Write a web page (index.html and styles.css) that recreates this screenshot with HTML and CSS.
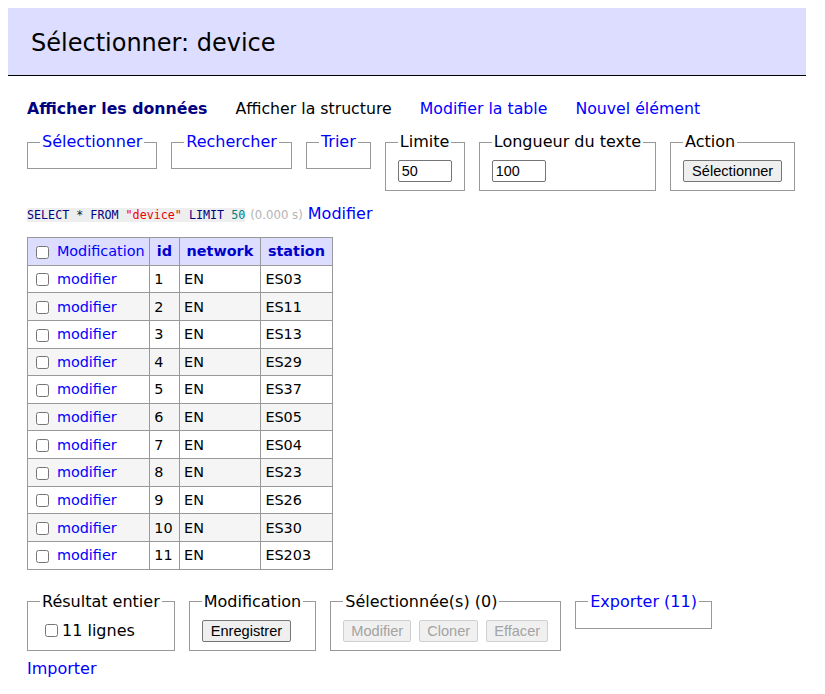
FILE: index.html
```html
<!DOCTYPE html>
<html lang="fr">
<head>
<meta charset="utf-8">
<title>Sélectionner: device</title>
<link rel="stylesheet" href="styles.css">
</head>
<body>
<div class="page">
  <h1 class="title">Sélectionner: device</h1>
  <div class="content">
    <p class="nav">
      <a class="current" href="#">Afficher les données</a>
      <a class="plain" href="#">Afficher la structure</a>
      <a href="#">Modifier la table</a>
      <a href="#">Nouvel élément</a>
    </p>
    <form class="filters">
      <fieldset class="box"><legend><a href="#">Sélectionner</a></legend></fieldset>
      <fieldset class="box"><legend><a href="#">Rechercher</a></legend></fieldset>
      <fieldset class="box"><legend><a href="#">Trier</a></legend></fieldset>
      <fieldset class="box"><legend>Limite</legend><div class="row"><input class="text" type="text" value="50"></div></fieldset>
      <fieldset class="box"><legend>Longueur du texte</legend><div class="row"><input class="text" type="text" value="100"></div></fieldset>
      <fieldset class="box"><legend>Action</legend><div class="row"><button class="btn" type="button">Sélectionner</button></div></fieldset>
    </form>
    <p class="query"><code class="sql"><span class="kw">SELECT</span> * <span class="kw">FROM</span> <span class="str">"device"</span> <span class="kw">LIMIT</span> <span class="num">50</span></code> <span class="time">(0.000 s)</span> <a href="#">Modifier</a></p>
    <table class="grid">
      <thead>
        <tr><td><input class="check" type="checkbox"> <a class="lnk" href="#">Modification</a></td><th><a class="col" href="#">id</a></th><th><a class="col" href="#">network</a></th><th><a class="col" href="#">station</a></th></tr>
      </thead>
      <tbody>
        <tr><td><input class="check" type="checkbox"> <a class="lnk" href="#">modifier</a></td><td>1</td><td>EN</td><td>ES03</td></tr>
        <tr><td><input class="check" type="checkbox"> <a class="lnk" href="#">modifier</a></td><td>2</td><td>EN</td><td>ES11</td></tr>
        <tr><td><input class="check" type="checkbox"> <a class="lnk" href="#">modifier</a></td><td>3</td><td>EN</td><td>ES13</td></tr>
        <tr><td><input class="check" type="checkbox"> <a class="lnk" href="#">modifier</a></td><td>4</td><td>EN</td><td>ES29</td></tr>
        <tr><td><input class="check" type="checkbox"> <a class="lnk" href="#">modifier</a></td><td>5</td><td>EN</td><td>ES37</td></tr>
        <tr><td><input class="check" type="checkbox"> <a class="lnk" href="#">modifier</a></td><td>6</td><td>EN</td><td>ES05</td></tr>
        <tr><td><input class="check" type="checkbox"> <a class="lnk" href="#">modifier</a></td><td>7</td><td>EN</td><td>ES04</td></tr>
        <tr><td><input class="check" type="checkbox"> <a class="lnk" href="#">modifier</a></td><td>8</td><td>EN</td><td>ES23</td></tr>
        <tr><td><input class="check" type="checkbox"> <a class="lnk" href="#">modifier</a></td><td>9</td><td>EN</td><td>ES26</td></tr>
        <tr><td><input class="check" type="checkbox"> <a class="lnk" href="#">modifier</a></td><td>10</td><td>EN</td><td>ES30</td></tr>
        <tr><td><input class="check" type="checkbox"> <a class="lnk" href="#">modifier</a></td><td>11</td><td>EN</td><td>ES203</td></tr>
      </tbody>
    </table>
    <form class="actions">
      <fieldset class="box"><legend>Résultat entier</legend><div class="row"><label class="all"><input class="check" type="checkbox"> 11 lignes</label></div></fieldset>
      <fieldset class="box"><legend>Modification</legend><div class="row"><button class="btn" type="button">Enregistrer</button></div></fieldset>
      <fieldset class="box"><legend>Sélectionnée(s) (0)</legend><div class="row btns"><button class="btn off" type="button" disabled>Modifier</button><button class="btn off" type="button" disabled>Cloner</button><button class="btn off" type="button" disabled>Effacer</button></div></fieldset>
      <fieldset class="box"><legend><a href="#">Exporter (11)</a></legend></fieldset>
    </form>
    <p class="import"><a href="#">Importer</a></p>
  </div>
</div>
</body>
</html>
```

FILE: styles.css
```css
html, body {
  margin: 0;
  padding: 0;
  background: #fff;
}

body {
  font-family: "DejaVu Sans", Verdana, sans-serif;
  font-size: 16px;
  line-height: 20px;
  color: #000;
}

a {
  color: #00f;
  text-decoration: none;
}

.page {
  margin: 8px 19px 8px 8px;
}

.title {
  margin: 0;
  background: #ddf;
  border-bottom: 1px solid #000;
  font-size: 24px;
  line-height: 30px;
  font-weight: normal;
  padding: 20px 23px 17px;
}

.content {
  padding-left: 19px;
}

.nav {
  display: flex;
  gap: 28px;
  margin: 23px 0 0;
  font-size: 15.75px;
}

.nav .current {
  font-weight: bold;
  color: #000080;
}

.nav .plain {
  color: #000;
}

.filters,
.actions {
  display: flex;
  align-items: flex-start;
  gap: 14px;
  margin: 13px 0 0;
}

.actions {
  margin-top: 22px;
}

.box {
  margin: 0;
  padding: 8px 12px;
  border: 1px solid #999;
  min-width: 0;
}

.box legend {
  padding: 0 2px;
  line-height: 20px;
}

.row {
  display: flex;
  align-items: center;
  height: 22px;
}

.btns {
  gap: 8px;
}

.text {
  box-sizing: border-box;
  width: 54px;
  height: 22px;
  margin: 0;
  padding: 1px 3px;
  border: 1px solid #767676;
  border-radius: 2px;
  font-family: "Liberation Sans", Arial, sans-serif;
  font-size: 14.4px;
  color: #000;
  background: #fff;
}

.btn {
  box-sizing: border-box;
  height: 22px;
  margin: 0;
  padding: 1px 8px;
  border: 1px solid #767676;
  border-radius: 2px;
  background: #efefef;
  font-family: "Liberation Sans", Arial, sans-serif;
  font-size: 14.6px;
  color: #000;
}

.btn.off {
  padding: 1px 7px;
  color: #a3a3a3;
  border-color: #cfcfcf;
  background: #f0f0f0;
}

.query {
  margin: 13px 0 0;
}

.sql {
  font-family: "DejaVu Sans Mono", "Liberation Mono", monospace;
  font-size: 11.7px;
  background: #eee;
  color: #222;
}

.sql .kw {
  color: #000080;
}

.sql .str {
  color: #e00;
}

.sql .num {
  color: #008080;
}

.time {
  font-size: 11.7px;
  color: #b4b4b4;
}

.grid {
  border-collapse: collapse;
  border: 1px solid #999;
  font-size: 14.4px;
  line-height: 18px;
  margin-top: 12px;
}

.grid td,
.grid th {
  border: 1px solid #999;
  padding: 4.32px;
  text-align: left;
  white-space: nowrap;
}

.grid thead td,
.grid thead th {
  background: #ddf;
}

.grid thead th {
  padding: 4.32px 6.8px;
  text-align: center;
}

.grid tbody tr:nth-child(even) td {
  background: #f5f5f5;
}

.grid .col {
  color: #0000cc;
  font-weight: bold;
}

.check {
  width: 13px;
  height: 13px;
  margin: 0 3px 0 4px;
  vertical-align: middle;
}

.all {
  display: flex;
  align-items: center;
}

.all .check {
  margin: 0 4px 0 5px;
}

.import {
  margin: 8px 0 0;
}
```
